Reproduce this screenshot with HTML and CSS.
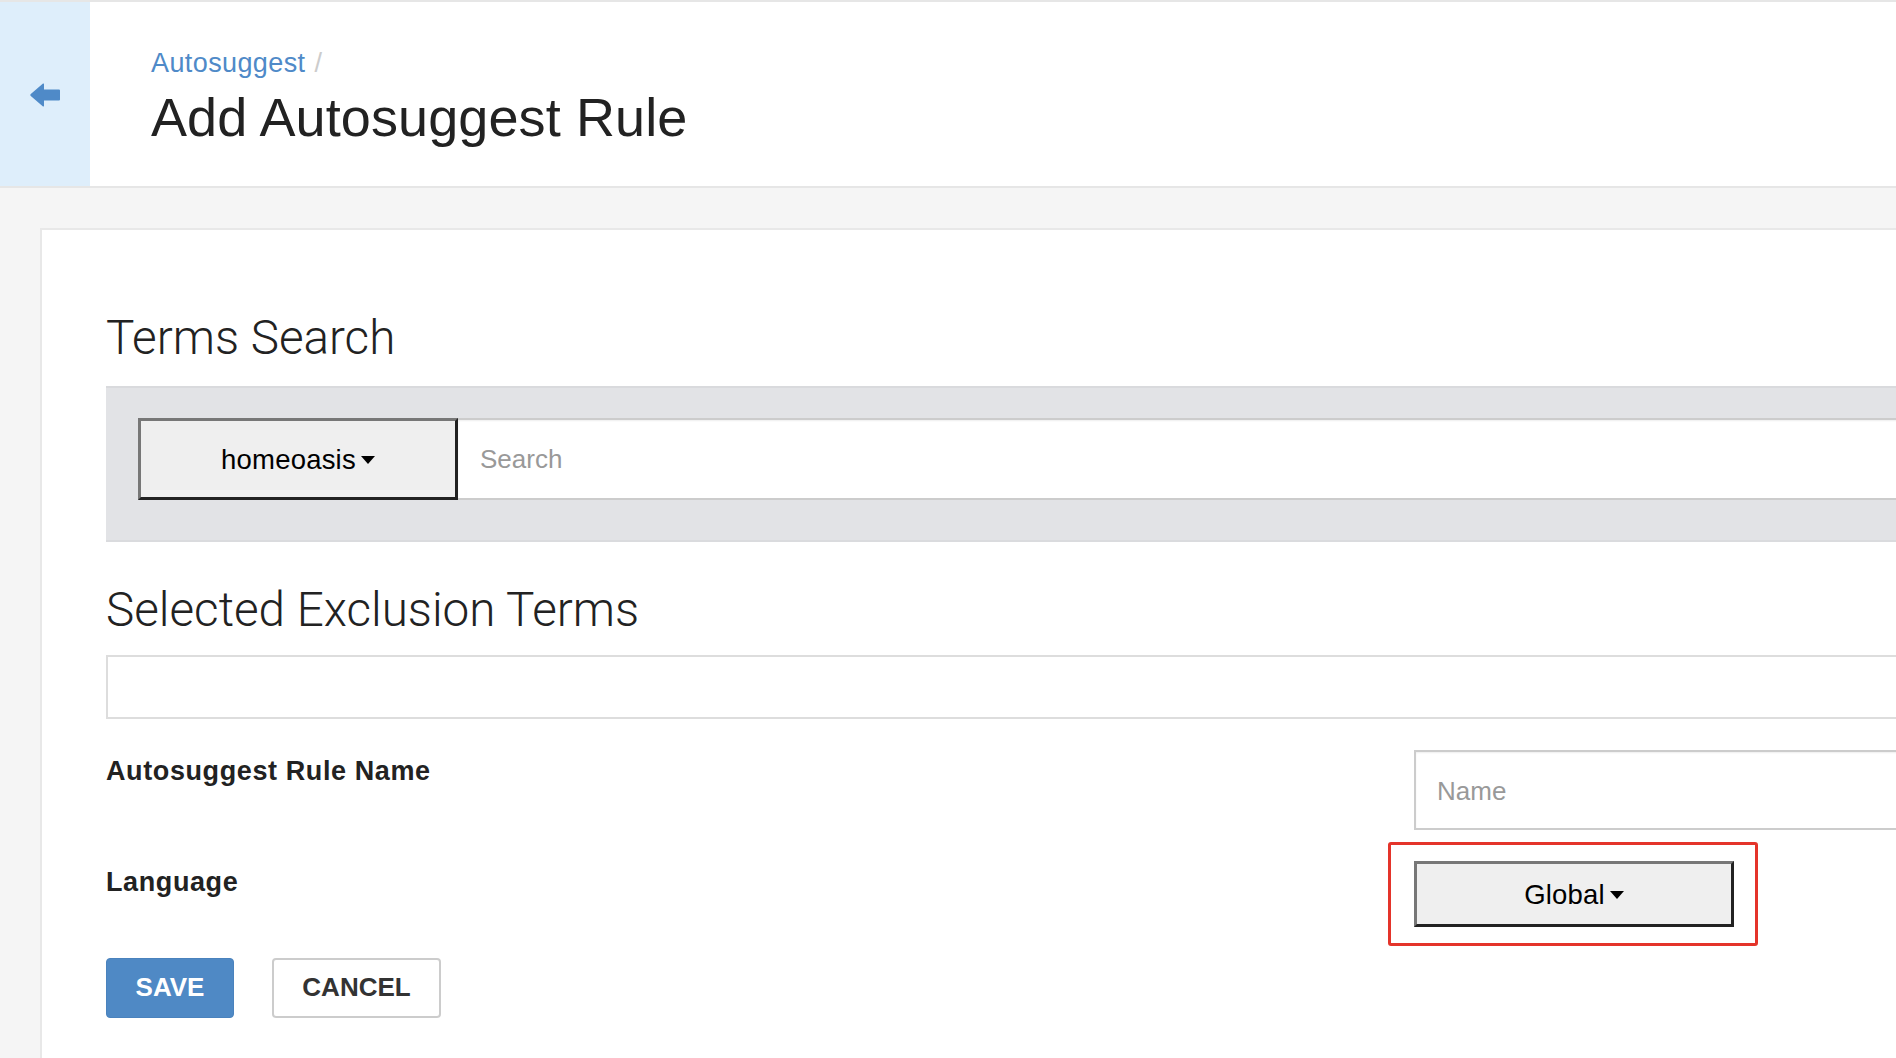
FILE: index.html
```html
<!DOCTYPE html>
<html lang="en">
<head>
<meta charset="utf-8">
<title>Add Autosuggest Rule</title>
<link rel="stylesheet" href="styles.css">
</head>
<body>
<header class="page-header">
  <a class="back" href="#" aria-label="Back">
    <svg width="30" height="24" viewBox="0 0 30 24"><path d="M0.5 12 Q0 11.5 0.8 10.9 L13 0.6 Q14 0 14 1.2 L14 6.5 L29 6.5 Q30 6.5 30 7.5 L30 16.5 Q30 17.5 29 17.5 L14 17.5 L14 22.8 Q14 24 13 23.4 L0.8 13.1 Q0 12.5 0.5 12 Z" fill="#4f8ac8"/></svg>
  </a>
  <div class="titles">
    <nav class="crumbs"><a href="#">Autosuggest</a><span class="sep">/</span></nav>
    <h1>Add Autosuggest Rule</h1>
  </div>
</header>
<main class="main">
  <section class="card">
    <h2 class="section-title">Terms Search</h2>
    <div class="search-panel">
      <div class="search-group">
        <button class="dd">homeoasis<span class="caret"></span></button>
        <input class="search" type="text" placeholder="Search">
      </div>
    </div>
    <h2 class="section-title second">Selected Exclusion Terms</h2>
    <div class="terms-box"></div>
    <div class="form-row">
      <label class="form-label">Autosuggest Rule Name</label>
      <div class="control"><input class="name" type="text" placeholder="Name"></div>
    </div>
    <div class="form-row">
      <label class="form-label">Language</label>
      <div class="control">
        <div class="highlight-wrap">
          <button class="dd dd-lang">Global<span class="caret"></span></button>
          <span class="highlight"></span>
        </div>
      </div>
    </div>
    <div class="actions">
      <button class="btn save">SAVE</button>
      <button class="btn cancel">CANCEL</button>
    </div>
  </section>
</main>
</body>
</html>
```

FILE: styles.css
```css
* { box-sizing: border-box; }
html, body { margin: 0; height: 100%; overflow: hidden; }
body {
  font-family: "Liberation Sans", Arial, sans-serif;
  background: #f5f5f5;
  color: #222;
}

.page-header {
  display: flex;
  height: 188px;
  background: #fff;
  border-top: 2px solid #e6e6e6;
  border-bottom: 2px solid #e6e6e6;
}
.back {
  width: 90px;
  flex: none;
  background: #deeefb;
  display: flex;
  align-items: center;
  justify-content: center;
  padding-top: 1px;
}
.titles { padding: 45px 0 0 61px; }
.crumbs { font-size: 27px; line-height: 1.2; letter-spacing: 0.4px; }
.crumbs a { color: #4f8ac8; text-decoration: none; }
.crumbs .sep { color: #ccc; margin-left: 9px; }
h1 {
  margin: 6px 0 0;
  font-size: 54px;
  line-height: 1.2;
  font-weight: 400;
  letter-spacing: 0.1px;
  color: #222;
}

.main { padding: 40px 0 0 40px; }
.card {
  background: #fff;
  border-top: 2px solid #e8e8e8;
  border-left: 2px solid #e8e8e8;
  margin-right: -60px;
  padding: 85px 0 80px 64px;
  min-height: 900px;
}

.section-title {
  font-family: Roboto, "Liberation Sans", sans-serif;
  font-weight: 300;
  font-size: 47.6px;
  line-height: 1;
  margin: 0 0 23px;
  color: #222;
}
.section-title.second { margin: 45px 0 21px; }

.search-panel {
  background: #e2e3e6;
  border-top: 2px solid #d9dadd;
  border-bottom: 2px solid #dadbde;
  padding: 30px 0 40px 32px;
}
.search-group { display: flex; height: 82px; }

.dd {
  width: 320px;
  height: 82px;
  flex: none;
  background: #efefef;
  border: 3px solid;
  border-color: #777 #222 #222 #777;
  font-family: "Liberation Sans", Arial, sans-serif;
  font-size: 27.5px;
  letter-spacing: 0.2px;
  color: #000;
  display: flex;
  align-items: center;
  justify-content: center;
  padding: 2px 0 0;
}
.caret {
  display: inline-block;
  width: 0;
  height: 0;
  border-top: 8px solid #000;
  border-left: 7px solid transparent;
  border-right: 7px solid transparent;
  margin-left: 5px;
}
.search {
  flex: 1;
  min-width: 0;
  height: 82px;
  border: 0;
  border-top: 2px solid #ccc;
  border-bottom: 2px solid #ccc;
  background: #fff;
  padding: 2px 0 0 22px;
  font-family: "Liberation Sans", Arial, sans-serif;
  font-size: 26px;
  color: #333;
  box-shadow: inset 0 1px 2px rgba(0,0,0,.07);
  outline: none;
}
.search::placeholder, .name::placeholder { color: #999; }

.terms-box {
  height: 64px;
  border: 2px solid #ddd;
  margin-bottom: 31px;
}

.form-row {
  display: grid;
  grid-template-columns: 1308px 1fr;
  margin-bottom: 31px;
}
.form-row:nth-of-type(2) { margin-bottom: 30px; }
.form-label {
  font-weight: 700;
  font-size: 27px;
  line-height: 1.2;
  letter-spacing: 0.6px;
  padding-top: 5px;
  color: #222;
}
.name {
  display: block;
  width: 100%;
  height: 80px;
  border: 2px solid #ccc;
  padding: 2px 0 0 21px;
  font-family: "Liberation Sans", Arial, sans-serif;
  font-size: 26px;
  color: #333;
  box-shadow: inset 0 1px 2px rgba(0,0,0,.07);
  outline: none;
}
.highlight-wrap { position: relative; width: 320px; }
.dd-lang { height: 66px; }
.highlight {
  position: absolute;
  left: -26px;
  top: -19px;
  width: 370px;
  height: 104px;
  border: 3px solid #e4342a;
  border-radius: 3px;
  pointer-events: none;
}

.actions { display: flex; gap: 38px; }
.btn {
  height: 60px;
  border-radius: 4px;
  font-family: "Liberation Sans", Arial, sans-serif;
  font-weight: 700;
  font-size: 26px;
  padding: 0 0 2px;
}
.save {
  width: 128px;
  background: #4f89c5;
  color: #fff;
  border: 1px solid #4a82bd;
}
.cancel {
  width: 169px;
  background: #fff;
  color: #333;
  border: 2px solid #ccc;
}
```
